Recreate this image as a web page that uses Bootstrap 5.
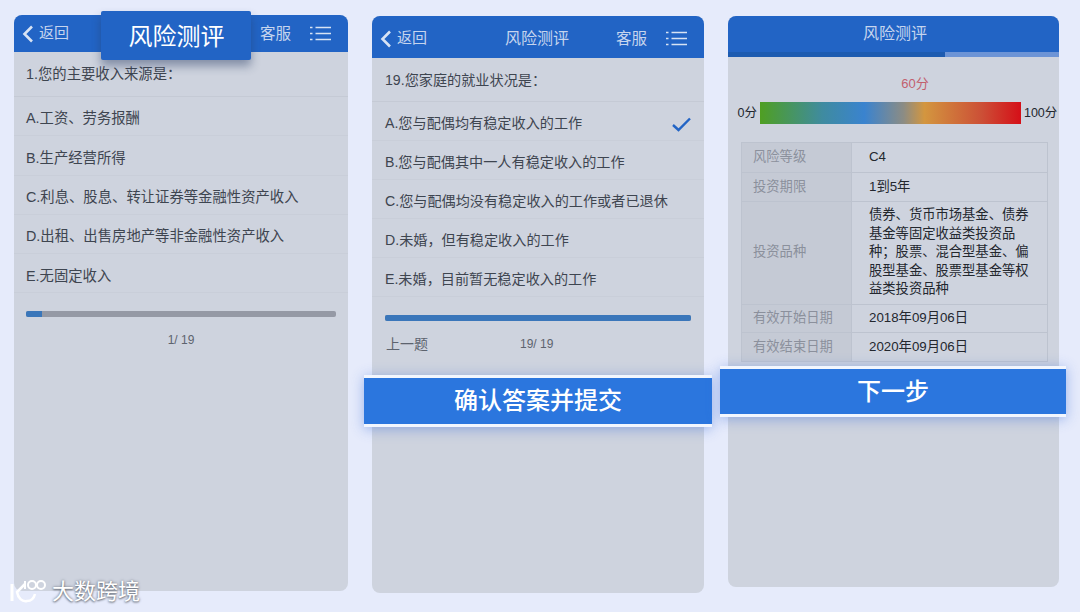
<!DOCTYPE html>
<html lang="zh-CN">
<head>
<meta charset="UTF-8">
<title>风险测评</title>
<link href="https://cdn.jsdelivr.net/npm/bootstrap@5.3.0/dist/css/bootstrap.min.css" rel="stylesheet">
<style>
html, body { height: 612px; overflow: hidden; }
body { background: #e6ebfb; font-family: "Liberation Sans", "Noto Sans CJK SC", sans-serif; color: #3e4550; position: relative; padding-left: 14px; gap: 24px; }
.phone { background: #ced3de; border-radius: 8px; position: relative; flex: none; }
.phone-one { width: 334px; height: 576px; margin-top: 15px; }
.phone-two { width: 332px; height: 577px; margin-top: 16px; }
.phone-three { width: 331px; height: 571px; margin-top: 16px; }
.topbar { background: #2264c5; border-radius: 8px 8px 0 0; color: #c6d5ee; padding-left: 8px; padding-right: 17px; }
.phone-one .topbar { height: 37px; }
.phone-two .topbar { height: 42px; padding-top: 3px; }
.back-link { font-size: 15px; gap: 5px; }
.bar-title { font-size: 16px; }
.help-link { font-size: 15.5px; margin-right: 19px; }
.phone-two .bar-title { width: 64px; white-space: nowrap; }
.phone-two .back-link { width: 125px; }
.q-title { padding: 2px 12px 0; border-bottom: 1px solid #c5cad5; display: flex; align-items: center; }
.phone-one .q-title { height: 45px; font-size: 14.35px; }
.phone-two .q-title { height: 44px; font-size: 14.15px; }
.phone-two .q-title, .phone-two .opt-row { padding-left: 13px; }
.opt-list { --bs-list-group-bg: transparent; --bs-list-group-border-width: 0; border-radius: 0; }
.opt-row { color: #3e4550; padding: 6px 12px 0; display: flex; align-items: center; justify-content: space-between; border-bottom: 1px solid #c9ced9 !important; }
.phone-one .opt-row { font-size: 14.35px; height: 39.3px; }
.phone-two .opt-row { font-size: 14.15px; height: 39px; }
.step-bar { --bs-progress-bg: #9599a5; --bs-progress-bar-bg: #3a76ba; --bs-progress-height: 6px; --bs-progress-border-radius: 2px; }
.phone-one .step-bar { margin: 17.500px 12px 0; }
.phone-two .step-bar { margin: 18px 13px 0; }
.step-count { font-size: 12px; color: #5d636e; }
.phone-one .step-count { text-align: center; margin-top: 16px; line-height: 14px; }
.step-foot { margin: 13px 14px 0; font-size: 14px; color: #5d636e; }
.step-foot .step-count { margin-left: 92px; margin-top: -2px; }
.callout { position: absolute; color: #fff; text-align: center; }
.callout-title { left: 87px; top: -4px; width: 150px; height: 49px; padding-left: 1px; background: #2264c5; border-radius: 2px; font-size: 24px; line-height: 51px; box-shadow: 0 6px 10px rgba(40, 60, 100, .45); }
.callout-wide { background: #2b76de; border-top: 3px solid #f2f6fe; border-bottom: 3px solid #f2f6fe; box-shadow: 0 2px 12px rgba(60, 110, 220, .45); font-size: 24px; font-weight: 500; }
.callout-confirm { left: -8px; top: 359px; width: 348px; height: 52px; line-height: 46px; }
.callout-next { left: -8px; top: 350px; width: 346px; height: 51px; line-height: 45px; }
.topbar-plain { height: 36px; font-size: 16px; padding: 0 0 0 3px; }
.top-steps { height: 5px; background: #6d94d6; }
.top-steps-done { height: 5px; width: 217px; background: #1d5bb0; }
.score-now { font-size: 13px; color: #c2606e; padding-left: 43px; text-align: center; margin-top: 19px; line-height: 16px; }
.score-row { font-size: 12.5px; color: #23272e; margin-top: 10px; padding-left: 9.500px; gap: 3px; white-space: nowrap; }
.score-band { width: 261px; height: 22px; flex: none; background: linear-gradient(90deg, #4f9f22 0%, #3f8ba0 24%, #3a83cf 40%, #8c8c84 55%, #d3963f 63%, #cc4f36 85%, #d50f18 100%); }
.info-grid { --bs-table-bg: transparent; --bs-table-border-color: #bdc3cf; width: 307px; margin: 18px 0 0 13px; font-size: 13.3px; line-height: 18.6px; }
.info-grid tr:first-child { height: 30px; }
.info-grid tr:last-child { height: 29px; }
.info-grid th { background: #c5cad5; color: #8b909c; font-weight: 400; width: 110px; padding: 4.500px 0 4.500px 11px; vertical-align: middle; }
.info-grid td { background: #ced3de; color: #23272e; padding: 4.500px 12px 4.500px 17px; vertical-align: middle; }
.brand-mark { position: absolute; left: 8px; top: 577px; color: #fff; text-shadow: 0 0 3px #6f7581, 0 1px 2px #6f7581; font-size: 22px; line-height: 30px; gap: 2px; }
</style>
</head>
<body class="d-flex align-items-start">

<div class="phone phone-one">
  <div class="topbar d-flex align-items-center">
    <div class="back-link d-flex align-items-center me-auto">
      <svg width="12" height="18" viewBox="0 0 12 18"><path d="M10 1.5 2.5 9l7.500 7.500" fill="none" stroke="#d8e3f4" stroke-width="2.600"/></svg>
      <span>返回</span>
    </div>
    <span class="help-link">客服</span>
    <svg width="21" height="15" viewBox="0 0 21 15"><path d="M0 1.500h2.500M0 7.500h2.500M0 13.500h2.500M5.500 1.500H21M5.500 7.500H21M5.500 13.500H21" stroke="#d8e3f4" stroke-width="1.700"/></svg>
  </div>
  <div class="callout callout-title">风险测评</div>
  <div class="q-title">1.您的主要收入来源是：</div>
  <div class="list-group opt-list">
    <div class="list-group-item opt-row">A.工资、劳务报酬</div>
    <div class="list-group-item opt-row">B.生产经营所得</div>
    <div class="list-group-item opt-row">C.利息、股息、转让证券等金融性资产收入</div>
    <div class="list-group-item opt-row">D.出租、出售房地产等非金融性资产收入</div>
    <div class="list-group-item opt-row">E.无固定收入</div>
  </div>
  <div class="progress step-bar"><div class="progress-bar" style="width: 5.3%"></div></div>
  <div class="step-count">1/ 19</div>
</div>

<div class="phone phone-two">
  <div class="topbar d-flex align-items-center">
    <div class="back-link d-flex align-items-center">
      <svg width="12" height="18" viewBox="0 0 12 18"><path d="M10 1.5 2.5 9l7.500 7.500" fill="none" stroke="#d8e3f4" stroke-width="2.600"/></svg>
      <span>返回</span>
    </div>
    <span class="bar-title">风险测评</span>
    <span class="help-link ms-auto">客服</span>
    <svg width="21" height="15" viewBox="0 0 21 15"><path d="M0 1.500h2.500M0 7.500h2.500M0 13.500h2.500M5.500 1.500H21M5.500 7.500H21M5.500 13.500H21" stroke="#d8e3f4" stroke-width="1.700"/></svg>
  </div>
  <div class="q-title">19.您家庭的就业状况是：</div>
  <div class="list-group opt-list">
    <div class="list-group-item opt-row">A.您与配偶均有稳定收入的工作
      <svg width="19" height="15" viewBox="0 0 19 15" style="margin-right: 1px"><path d="M1 8l5.500 5L18 1.500" fill="none" stroke="#2264c5" stroke-width="2.400"/></svg>
    </div>
    <div class="list-group-item opt-row">B.您与配偶其中一人有稳定收入的工作</div>
    <div class="list-group-item opt-row">C.您与配偶均没有稳定收入的工作或者已退休</div>
    <div class="list-group-item opt-row">D.未婚，但有稳定收入的工作</div>
    <div class="list-group-item opt-row">E.未婚，目前暂无稳定收入的工作</div>
  </div>
  <div class="progress step-bar"><div class="progress-bar" style="width: 100%"></div></div>
  <div class="step-foot d-flex align-items-center">
    <span>上一题</span>
    <span class="step-count">19/ 19</span>
  </div>
  <div class="callout callout-wide callout-confirm">确认答案并提交</div>
</div>

<div class="phone phone-three">
  <div class="topbar topbar-plain d-flex align-items-center justify-content-center">风险测评</div>
  <div class="top-steps"><div class="top-steps-done"></div></div>
  <div class="score-now">60分</div>
  <div class="score-row d-flex align-items-center">
    <span>0分</span>
    <div class="score-band"></div>
    <span>100分</span>
  </div>
  <table class="table table-bordered info-grid mb-0">
    <tbody>
      <tr><th>风险等级</th><td>C4</td></tr>
      <tr><th>投资期限</th><td>1到5年</td></tr>
      <tr><th>投资品种</th><td>债券、货币市场基金、债券基金等固定收益类投资品种；股票、混合型基金、偏股型基金、股票型基金等权益类投资品种</td></tr>
      <tr><th>有效开始日期</th><td>2018年09月06日</td></tr>
      <tr><th>有效结束日期</th><td>2020年09月06日</td></tr>
    </tbody>
  </table>
  <div class="callout callout-wide callout-next">下一步</div>
</div>

<div class="brand-mark d-flex align-items-center">
  <svg width="42" height="28" viewBox="0 0 42 28"><g fill="none" stroke="#fff" stroke-width="2"><path d="M4 6v17" stroke-width="3"/><path d="M17 6 9 14c1 6 5 10 10 9 4 0 7-3 8-7" stroke-width="2.500"/><path d="M17 3v8"/><circle cx="24" cy="7" r="4"/><circle cx="33" cy="7" r="4"/></g></svg>
  <span>大数跨境</span>
</div>

<script src="https://cdn.jsdelivr.net/npm/bootstrap@5.3.0/dist/js/bootstrap.bundle.min.js"></script>
</body>
</html>
